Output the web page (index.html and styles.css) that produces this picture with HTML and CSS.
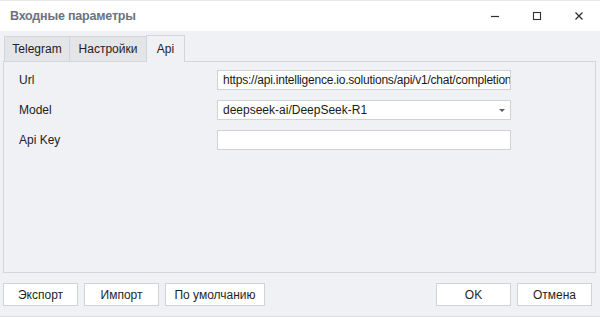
FILE: index.html
```html
<!DOCTYPE html>
<html>
<head>
<meta charset="utf-8">
<link rel="stylesheet" href="styles.css">
</head>
<body>
<div class="window">
  <div class="titlebar">
    <div class="title">Входные параметры</div>
    <div class="controls">
      <span class="ctl"><svg width="10" height="10" viewBox="0 0 10 10"><path d="M1 5.5h8" stroke="#2b2f36" stroke-width="1.2"/></svg></span>
      <span class="ctl"><svg width="10" height="10" viewBox="0 0 10 10"><rect x="1.5" y="1.5" width="7" height="7" fill="none" stroke="#2b2f36" stroke-width="1.1"/></svg></span>
      <span class="ctl"><svg width="10" height="10" viewBox="0 0 10 10"><path d="M1.5 1.5l7 7M8.5 1.5l-7 7" stroke="#2b2f36" stroke-width="1.3"/></svg></span>
    </div>
  </div>
  <div class="body">
    <div class="tabs">
      <div class="tab tab-tg">Telegram</div>
      <div class="tab tab-set">Настройки</div>
      <div class="tab active">Api</div>
    </div>
    <div class="panel">
      <div class="row">
        <label class="lbl">Url</label>
        <div class="field url">https://api.intelligence.io.solutions/api/v1/chat/completions</div>
      </div>
      <div class="row">
        <label class="lbl">Model</label>
        <div class="field combo"><span>deepseek-ai/DeepSeek-R1</span><span class="arrow"></span></div>
      </div>
      <div class="row">
        <label class="lbl">Api Key</label>
        <div class="field"></div>
      </div>
    </div>
    <div class="footer">
      <div class="left">
        <button class="btn b-exp">Экспорт</button>
        <button class="btn b-imp">Импорт</button>
        <button class="btn b-def">По умолчанию</button>
      </div>
      <div class="right">
        <button class="btn b-ok">OK</button>
        <button class="btn b-cancel">Отмена</button>
      </div>
    </div>
  </div>
</div>
</body>
</html>
```
FILE: styles.css
```css
* { box-sizing: border-box; }
html, body { margin: 0; padding: 0; }
body {
  width: 600px;
  height: 317px;
  overflow: hidden;
  background: #f0f1f4;
  font-family: "Liberation Sans", Arial, sans-serif;
  font-size: 12px;
  color: #1f1f1f;
}
.window {
  width: 600px;
  height: 317px;
  display: flex;
  flex-direction: column;
  border-top: 1px solid #e6e6e6;
}
.titlebar {
  height: 30px;
  background: #ffffff;
  display: flex;
  align-items: center;
  justify-content: space-between;
  padding-left: 10px;
}
.title {
  font-weight: bold;
  font-size: 12.5px;
  color: #6a7282;
  letter-spacing: -0.2px;
}
.controls { display: flex; height: 100%; }
.ctl {
  width: 42px;
  display: flex;
  align-items: center;
  justify-content: center;
}
.body {
  flex: 1;
  display: flex;
  flex-direction: column;
  padding: 4px 4px 0 3px;
  border-bottom: 1px solid #dcdde0;
}
.tabs {
  display: flex;
  height: 26px;
  padding-left: 1px;
  align-items: flex-end;
}
.tab {
  height: 26px;
  display: flex;
  align-items: center;
  justify-content: center;
  background: #e3e5e9;
  border: 1px solid #d2d5da;
  border-bottom: none;
  color: #222;
  margin-right: -1px;
}
.tab-tg { width: 66px; height: 25px; }
.tab-set { width: 78px; height: 25px; }
.tab.active {
  width: 39px;
  height: 27px;
  background: #f0f1f4;
  position: relative;
  top: 1px;
  z-index: 1;
}
.panel {
  height: 212px;
  border: 1px solid #d2d5da;
  padding: 8px 0 0 15px;
  display: flex;
  flex-direction: column;
  gap: 10px;
}
.row {
  display: flex;
  align-items: center;
  height: 20px;
}
.lbl {
  width: 198px;
  color: #222;
}
.field {
  width: 294px;
  height: 20px;
  background: #fff;
  border: 1px solid #d0d2d6;
  padding: 0 5px;
  display: flex;
  align-items: center;
  white-space: nowrap;
  overflow: hidden;
  color: #1a1a1a;
}
.url { letter-spacing: -0.22px; }
.combo { justify-content: space-between; padding-right: 4px; }
.arrow {
  width: 0;
  height: 0;
  border-left: 3.5px solid transparent;
  border-right: 3.5px solid transparent;
  border-top: 3.5px solid #5a5e66;
  margin-right: 1px;
}
.footer {
  display: flex;
  justify-content: space-between;
  padding-top: 10px;
  padding-right: 4px;
}
.left, .right { display: flex; gap: 6px; }
.btn {
  height: 23px;
  background: #fff;
  border: 1px solid #cfd2d6;
  font-family: "Liberation Sans", Arial, sans-serif;
  font-size: 12px;
  color: #1f1f1f;
  padding: 0;
}
.b-exp { width: 75px; }
.b-imp { width: 75px; }
.b-def { width: 100px; }
.b-ok { width: 75px; }
.b-cancel { width: 75px; }
```
